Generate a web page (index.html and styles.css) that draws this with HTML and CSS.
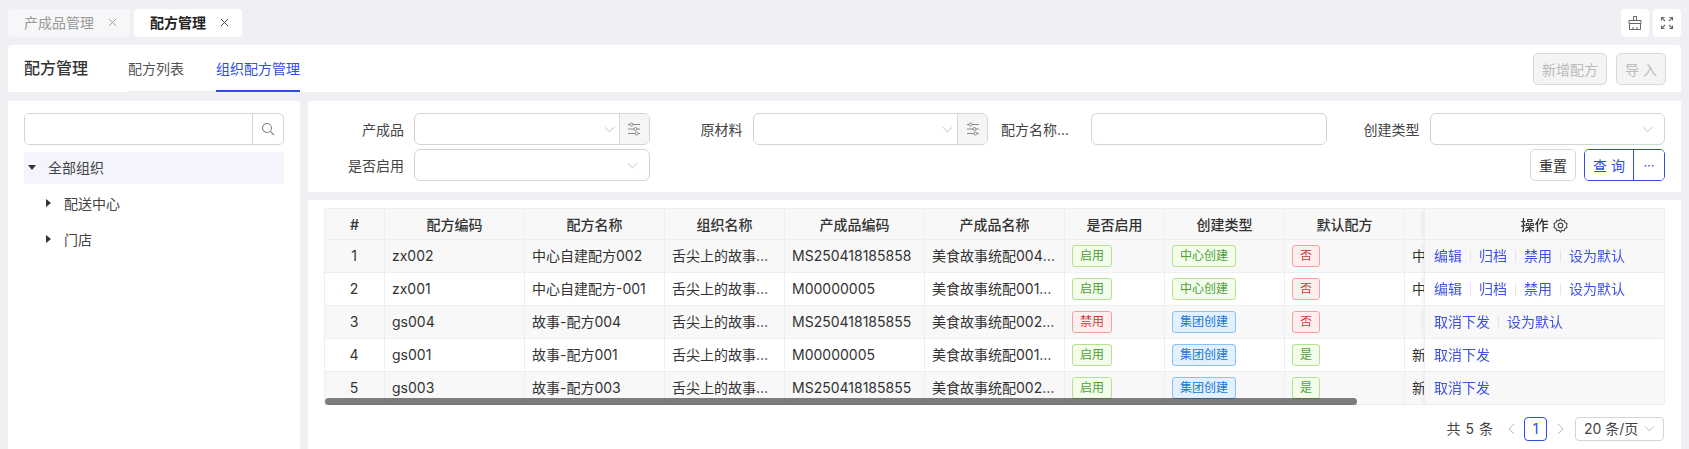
FILE: index.html
```html
<!DOCTYPE html>
<html lang="zh-CN">
<head>
    <meta charset="UTF-8">
    <title>配方管理</title>
    <link rel="stylesheet" href="styles.css">
</head>
<body>

    <svg class="defs" width="0" height="0">
        <symbol id="i-close" viewBox="0 0 10 10"><path d="M1 1l8 8M9 1l-8 8" fill="none" stroke="currentColor" stroke-width="1"/></symbol>
        <symbol id="i-chev" viewBox="0 0 12 7"><path d="M1 1l5 5 5-5" fill="none" stroke="currentColor" stroke-width="1"/></symbol>
        <symbol id="i-tune" viewBox="0 0 14 14"><g fill="none" stroke="currentColor" stroke-width="1"><path d="M1 2.5h2M6 2.5h7M1 7h6M10 7h3M1 11.5h7M11 11.5h2"/><circle cx="4.5" cy="2.5" r="1.5"/><circle cx="8.5" cy="7" r="1.5"/><circle cx="9.5" cy="11.5" r="1.5"/></g></symbol>
    </svg>

    <header class="tabbar">
        <div class="page-tab">产成品管理 <svg class="tab-x"><use href="#i-close"/></svg></div>
        <div class="page-tab active">配方管理 <svg class="tab-x"><use href="#i-close"/></svg></div>
        <div class="tabbar-tools">
            <button class="tool-btn">
                <svg width="14" height="14" viewBox="0 0 14 14" fill="none" stroke="#666" stroke-width="1"><path d="M5.500 4.500v-4h3v4M1 4.500h12v3H1zM1.500 7.500v6h11v-6M5 13.500V11M9 13.500V11"/></svg>
            </button>
            <button class="tool-btn">
                <svg width="14" height="14" viewBox="0 0 14 14" fill="none" stroke="#666" stroke-width="1.100"><path d="M1.500 1.500l3.500 3.500M12.500 1.500L9 5M1.500 12.500L5 9M12.500 12.500L9 9M1.500 4.500v-3h3M9.500 1.500h3v3M1.500 9.500v3h3M9.500 12.500h3v-3"/></svg>
            </button>
        </div>
    </header>

    <section class="title-card">
        <h1>配方管理</h1>
        <nav class="sub-tabs">
            <a>配方列表</a>
            <a class="active">组织配方管理</a>
        </nav>
        <div class="title-actions">
            <button class="btn disabled">新增配方</button>
            <button class="btn disabled">导 入</button>
        </div>
    </section>

    <main class="content">

        <aside class="org-panel">
            <div class="search-box">
                <input type="text">
                <span class="search-btn">
                    <svg width="14" height="14" viewBox="0 0 14 14" fill="none" stroke="#888" stroke-width="1.100"><circle cx="6" cy="6" r="4.500"/><path d="M9.300 9.300l3.700 3.700"/></svg>
                </span>
            </div>
            <div class="tree-row selected"><i class="caret-down"></i>全部组织</div>
            <div class="tree-row child"><i class="caret-right"></i>配送中心</div>
            <div class="tree-row child"><i class="caret-right"></i>门店</div>
        </aside>

        <div class="right-col">

            <form class="filter-card">
                <div class="field">
                    <label>产成品</label>
                    <div class="select">
                        <span class="select-inner with-addon"><svg class="chev"><use href="#i-chev"/></svg></span>
                        <span class="addon"><svg class="tune"><use href="#i-tune"/></svg></span>
                    </div>
                </div>
                <div class="field">
                    <label>原材料</label>
                    <div class="select">
                        <span class="select-inner with-addon"><svg class="chev"><use href="#i-chev"/></svg></span>
                        <span class="addon"><svg class="tune"><use href="#i-tune"/></svg></span>
                    </div>
                </div>
                <div class="field">
                    <label class="long-label">配方名称...</label>
                    <div class="select"></div>
                </div>
                <div class="field">
                    <label>创建类型</label>
                    <div class="select">
                        <span class="select-inner"><svg class="chev"><use href="#i-chev"/></svg></span>
                    </div>
                </div>
                <div class="field">
                    <label>是否启用</label>
                    <div class="select">
                        <span class="select-inner"><svg class="chev"><use href="#i-chev"/></svg></span>
                    </div>
                </div>
                <div class="filter-actions">
                    <button type="button" class="btn">重置</button>
                    <div class="btn-group">
                        <button type="button" class="group-main">查 询</button>
                        <button type="button" class="group-more">···</button>
                    </div>
                </div>
            </form>

            <section class="table-card">
                <div class="table-wrap">
                    <table>
                        <colgroup>
                            <col class="c60"><col class="c140"><col class="c140"><col class="c120"><col class="c140"><col class="c140"><col class="c100"><col class="c120"><col class="c120"><col class="c210"><col class="c210"><col class="c240">
                        </colgroup>
                        <thead>
                            <tr>
                                <th>#</th><th>配方编码</th><th>配方名称</th><th>组织名称</th><th>产成品编码</th><th>产成品名称</th><th>是否启用</th><th>创建类型</th><th>默认配方</th><th>来源组织</th><th>备注</th>
                                <th class="fixed">操作
                                    <svg class="gear" width="15" height="15" viewBox="0 0 14 14" fill="none" stroke="#444" stroke-width="1"><path d="M7 .8l1.300 1.700 2.100-.3.800 2 1.900 1-.5 1.800.5 1.800-1.900 1-.8 2-2.100-.3L7 13.200l-1.300-1.700-2.100.3-.8-2-1.900-1 .5-1.800-.5-1.800 1.900-1 .8-2 2.100.3z"/><circle cx="7" cy="7" r="2.200"/></svg>
                                </th>
                            </tr>
                        </thead>
                        <tbody>
                            <tr>
                                <td class="center">1</td><td>zx002</td><td>中心自建配方002</td><td>舌尖上的故事集团总部</td><td>MS250418185858</td><td>美食故事统配004产成品</td>
                                <td><span class="tag green">启用</span></td><td><span class="tag green">中心创建</span></td><td><span class="tag red">否</span></td><td>中心自建</td><td></td>
                                <td class="fixed"><a>编辑</a><i></i><a>归档</a><i></i><a>禁用</a><i></i><a>设为默认</a></td>
                            </tr>
                            <tr>
                                <td class="center">2</td><td>zx001</td><td>中心自建配方-001</td><td>舌尖上的故事集团总部</td><td>M00000005</td><td>美食故事统配001产成品</td>
                                <td><span class="tag green">启用</span></td><td><span class="tag green">中心创建</span></td><td><span class="tag red">否</span></td><td>中心自建</td><td></td>
                                <td class="fixed"><a>编辑</a><i></i><a>归档</a><i></i><a>禁用</a><i></i><a>设为默认</a></td>
                            </tr>
                            <tr>
                                <td class="center">3</td><td>gs004</td><td>故事-配方004</td><td>舌尖上的故事集团总部</td><td>MS250418185855</td><td>美食故事统配002产成品</td>
                                <td><span class="tag red">禁用</span></td><td><span class="tag blue">集团创建</span></td><td><span class="tag red">否</span></td><td></td><td></td>
                                <td class="fixed"><a>取消下发</a><i></i><a>设为默认</a></td>
                            </tr>
                            <tr>
                                <td class="center">4</td><td>gs001</td><td>故事-配方001</td><td>舌尖上的故事集团总部</td><td>M00000005</td><td>美食故事统配001产成品</td>
                                <td><span class="tag green">启用</span></td><td><span class="tag blue">集团创建</span></td><td><span class="tag green">是</span></td><td>新增下发</td><td></td>
                                <td class="fixed"><a>取消下发</a></td>
                            </tr>
                            <tr>
                                <td class="center">5</td><td>gs003</td><td>故事-配方003</td><td>舌尖上的故事集团总部</td><td>MS250418185855</td><td>美食故事统配002产成品</td>
                                <td><span class="tag green">启用</span></td><td><span class="tag blue">集团创建</span></td><td><span class="tag green">是</span></td><td>新增下发</td><td></td>
                                <td class="fixed"><a>取消下发</a></td>
                            </tr>
                        </tbody>
                    </table>
                    <div class="scroll-thumb"></div>
                </div>

                <div class="pager">
                    <span class="pager-total">共 5 条</span>
                    <svg class="pager-arrow" width="7" height="12" viewBox="0 0 7 12" fill="none" stroke="#bbb"><path d="M6 1L1 6l5 5"/></svg>
                    <span class="pager-num">1</span>
                    <svg class="pager-arrow" width="7" height="12" viewBox="0 0 7 12" fill="none" stroke="#bbb"><path d="M1 1l5 5-5 5"/></svg>
                    <span class="pager-size">20 条/页<svg class="chev"><use href="#i-chev"/></svg></span>
                </div>
            </section>

        </div>
    </main>

</body>
</html>
```

FILE: styles.css
```css
* {
    box-sizing: border-box;
}

html, body {
    height: 100%;
}

body {
    margin: 0;
    padding: 0 8px;
    overflow: hidden;
    display: flex;
    flex-direction: column;
    background-color: #eef0f4;
    color: #333;
    font-family: "Inter", "Noto Sans CJK SC", sans-serif;
    font-size: 14px;
}

button {
    font-family: inherit;
    font-size: 14px;
    cursor: pointer;
}

.defs {
    display: block;
    height: 0;
}

/* top tabs */
.tabbar {
    display: flex;
    gap: 4px;
    height: 45px;
    padding-top: 9px;
    flex-shrink: 0;
}

.page-tab {
    display: flex;
    align-items: center;
    justify-content: space-between;
    width: 122px;
    height: 28px;
    padding: 0 13px 2px 16px;
    border-radius: 4px;
    background-color: #f6f7f9;
    color: #999;
}

.page-tab.active {
    width: 108px;
    background-color: #fff;
    color: #222;
    font-weight: 700;
}

.tab-x {
    width: 9px;
    height: 9px;
    color: #999;
}

.page-tab.active .tab-x {
    color: #333;
}

.tabbar-tools {
    display: flex;
    gap: 4px;
    margin-left: auto;
}

.tool-btn {
    display: flex;
    align-items: center;
    justify-content: center;
    width: 28px;
    height: 28px;
    padding: 0;
    border: 0;
    border-radius: 4px;
    background-color: #fff;
}

/* page title */
.title-card {
    display: flex;
    flex-shrink: 0;
    height: 47px;
    padding: 0 15px 0 16px;
    background-color: #fff;
    border-radius: 4px 4px 0 0;
}

.title-card h1 {
    margin: 0 40px 0 0;
    font-size: 16px;
    font-weight: 500;
    line-height: 47px;
}

.sub-tabs {
    display: flex;
    gap: 32px;
    height: 47px;
    border-bottom: 1px solid #eee;
}

.sub-tabs a {
    line-height: 47px;
    height: 47px;
    color: #555;
}

.sub-tabs a.active {
    color: #2f4de6;
    border-bottom: 2px solid #2f4de6;
}

.title-actions {
    display: flex;
    gap: 9px;
    margin-left: auto;
    padding-top: 8px;
}

.btn {
    height: 32px;
    padding: 0 8px;
    border: 1px solid #d9d9d9;
    border-radius: 5px;
    background-color: #fff;
    color: #333;
}

.btn.disabled {
    background-color: #f4f4f4;
    color: #bbb;
}

/* main area */
.content {
    display: flex;
    flex: 1;
    gap: 8px;
    min-height: 0;
    margin-top: 9px;
}

.org-panel {
    width: 292px;
    flex-shrink: 0;
    padding: 12px 16px;
    background-color: #fff;
}

.search-box {
    display: flex;
    height: 32px;
    margin-bottom: 7px;
    border: 1px solid #d4d4d4;
    border-radius: 5px;
    overflow: hidden;
}

.search-box input {
    flex: 1;
    min-width: 0;
    border: 0;
}

.search-btn {
    display: flex;
    align-items: center;
    justify-content: center;
    width: 31px;
    border-left: 1px solid #d4d4d4;
}

.tree-row {
    display: flex;
    align-items: center;
    height: 32px;
    margin-bottom: 4px;
    padding-left: 24px;
    padding-bottom: 2px;
    border-radius: 4px;
    color: #444;
}

.tree-row.selected {
    background-color: #f3f4fc;
}

.tree-row.child {
    padding-left: 40px;
}

.caret-down {
    width: 0;
    height: 0;
    margin: 0 12px 0 -20px;
    border-style: solid;
    border-width: 5px 4px 0;
    border-color: #333 transparent transparent;
}

.caret-right {
    width: 0;
    height: 0;
    margin: 0 13px 0 -18px;
    border-style: solid;
    border-width: 4.5px 0 4.5px 5px;
    border-color: transparent transparent transparent #333;
}

.right-col {
    display: flex;
    flex: 1;
    flex-direction: column;
    gap: 8px;
    min-width: 0;
}

/* filters */
.filter-card {
    display: grid;
    grid-template-columns: repeat(4, 325.5px);
    column-gap: 13px;
    row-gap: 4px;
    padding: 12px 16px 11px;
    background-color: #fff;
}

.field {
    display: flex;
    align-items: center;
    gap: 10px;
}

.field label {
    flex: 0 0 80px;
    text-align: right;
    color: #444;
    white-space: nowrap;
}

.field .long-label {
    text-align: left;
}

.select {
    display: flex;
    flex: 1;
    height: 32px;
    border: 1px solid #d4d4d4;
    border-radius: 6px;
    overflow: hidden;
}

.select-inner {
    display: flex;
    flex: 1;
    align-items: center;
    justify-content: flex-end;
    padding-right: 11px;
}

.select-inner.with-addon {
    padding-right: 4px;
}

.chev {
    width: 11px;
    height: 7px;
    color: #bbb;
}

.addon {
    display: flex;
    align-items: center;
    justify-content: center;
    width: 30px;
    background-color: #f5f5f5;
    border-left: 1px solid #d9d9d9;
}

.tune {
    width: 14px;
    height: 14px;
    color: #888;
}

.filter-actions {
    grid-column: 4;
    display: flex;
    justify-content: flex-end;
    gap: 8px;
}

.btn-group {
    display: flex;
    height: 32px;
    border: 1px solid #2f4de6;
    border-radius: 5px;
    overflow: hidden;
}

.btn-group button {
    border: 0;
    background-color: #fff;
    color: #2f4de6;
    padding: 0;
}

.group-main {
    width: 49px;
    border-right: 1px solid #2f4de6 !important;
}

.group-more {
    width: 30px;
    font-size: 13px !important;
}

/* table */
.table-card {
    flex: 1;
    min-height: 0;
    padding: 8px 16px 0;
    background-color: #fff;
}

.table-wrap {
    position: relative;
    overflow: hidden;
    border-top: 1px solid #eee;
    border-left: 1px solid #eee;
    border-right: 1px solid #eee;
}

table {
    width: 1740px;
    table-layout: fixed;
    border-collapse: separate;
    border-spacing: 0;
}

.c60 { width: 60px; }
.c100 { width: 100px; }
.c120 { width: 120px; }
.c140 { width: 140px; }
.c210 { width: 210px; }
.c240 { width: 240px; }

th, td {
    height: 33px;
    padding: 0 8px 2px 7px;
    border-right: 1px solid #eee;
    border-bottom: 1px solid #eee;
    white-space: nowrap;
    overflow: hidden;
    text-overflow: ellipsis;
}

th {
    height: 31px;
    padding: 0 8px;
    background-color: #f8f8f8;
    font-weight: 500;
    text-align: center;
}

tbody tr:nth-child(odd) td {
    background-color: #f8f8f8;
}

tbody tr:nth-child(even) td {
    background-color: #fff;
}

.center {
    text-align: center;
}

th.fixed, td.fixed {
    position: sticky;
    right: 0;
    border-right: 0;
    border-left: 1px solid #eee;
    box-shadow: -3px 0 4px -2px rgba(0, 0, 0, .08);
}

td.fixed {
    padding-left: 9px;
}

td.fixed a {
    color: #3d52e8;
}

td.fixed i {
    display: inline-block;
    width: 1px;
    height: 12px;
    margin: 0 8px;
    vertical-align: -1px;
    background-color: #e6e6e6;
}

.gear {
    vertical-align: -3px;
    margin-left: 1px;
}

.tag {
    display: inline-block;
    height: 22px;
    margin-top: 2px;
    padding: 0 7px;
    border: 1px solid;
    border-radius: 3px;
    font-size: 12px;
    line-height: 19px;
    vertical-align: middle;
}

.tag.green {
    background-color: #f4fdec;
    border-color: #b3e38c;
    color: #4f9e3a;
}

.tag.red {
    background-color: #fff0f0;
    border-color: #f5a0a0;
    color: #cf3a3a;
}

.tag.blue {
    background-color: #e2f0ff;
    border-color: #8cc1f8;
    color: #1877d6;
}

.scroll-thumb {
    position: absolute;
    left: 0;
    bottom: 0;
    width: 1032px;
    height: 7px;
    border-radius: 4px;
    background-color: rgba(0, 0, 0, .5);
}

/* pagination */
.pager {
    display: flex;
    align-items: center;
    justify-content: flex-end;
    height: 24px;
    margin-top: 12px;
    padding-right: 1px;
    color: #444;
}

.pager-total {
    margin-right: 15px;
    padding-bottom: 2px;
    word-spacing: 1px;
}

.pager-num {
    width: 23px;
    height: 24px;
    margin: 0 10px 0 9px;
    border: 1px solid #2f4de6;
    border-radius: 4px;
    color: #2f4de6;
    line-height: 21px;
    text-align: center;
}

.pager-size {
    display: flex;
    align-items: center;
    justify-content: space-between;
    width: 89px;
    height: 24px;
    margin-left: 11px;
    padding: 0 8px 2px;
    border: 1px solid #d4d4d4;
    border-radius: 4px;
    white-space: nowrap;
}
```
